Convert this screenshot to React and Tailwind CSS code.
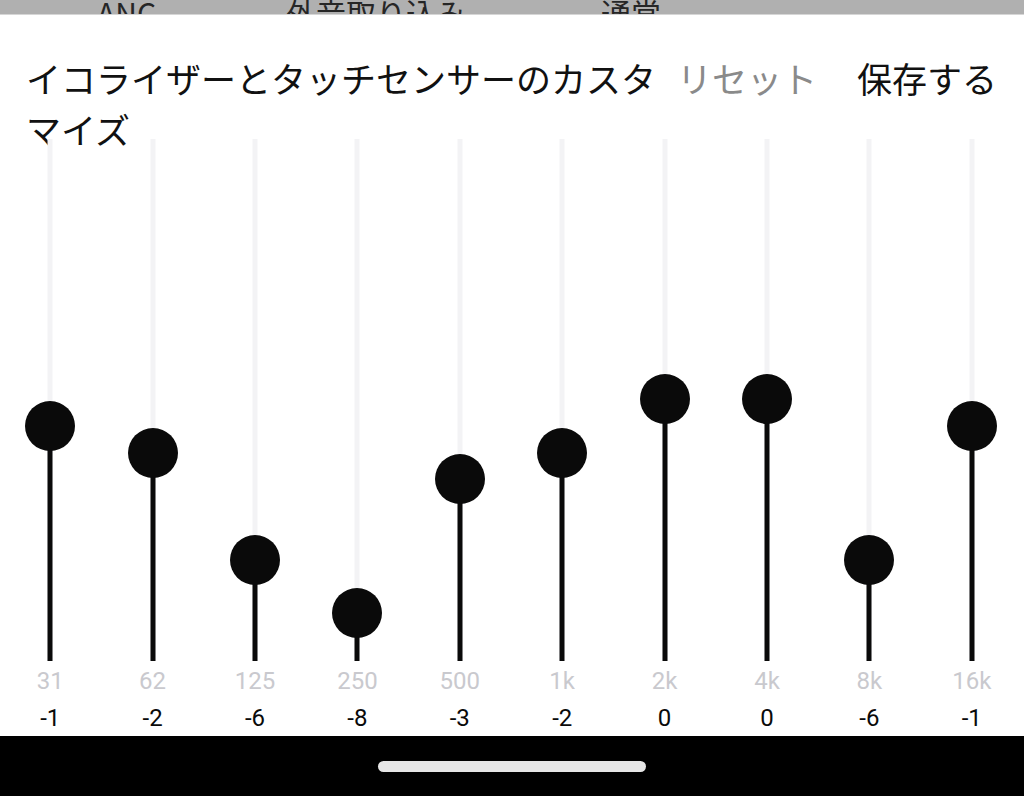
import React from "react";

const bands = [
  { freq: "31", value: -1 },
  { freq: "62", value: -2 },
  { freq: "125", value: -6 },
  { freq: "250", value: -8 },
  { freq: "500", value: -3 },
  { freq: "1k", value: -2 },
  { freq: "2k", value: 0 },
  { freq: "4k", value: 0 },
  { freq: "8k", value: -6 },
  { freq: "16k", value: -1 },
];

// track is 522px tall, 0 dB sits at 260px, ~26.75px per dB
const thumbTop = (value) => 260 - value * 26.75;

const Band = ({ band }) => {
  const center = thumbTop(band.value);

  return (
    <div className="flex flex-col items-center">
      <div className="relative h-[522px] w-[50px]">
        <div className="absolute left-1/2 top-0 h-full w-[5px] -translate-x-1/2 bg-[#f3f3f5]" />
        <div
          className="absolute bottom-0 left-1/2 w-[5px] -translate-x-1/2 bg-[#0a0a0a]"
          style={{ top: `${center}px` }}
        />
        <div
          className="absolute left-0 h-[50px] w-[50px] rounded-full bg-[#0a0a0a]"
          style={{ top: `${center - 25}px` }}
        />
      </div>
      <div className="mt-[2px] h-[36px] text-[24px] leading-[36px] text-[#c9c9ce]">
        {band.freq}
      </div>
      <div className="h-[37px] text-[24px] leading-[38px] text-[#0a0a0a]">
        {band.value}
      </div>
    </div>
  );
};

export default function App() {
  return (
    <div className="flex h-[796px] w-[1024px] flex-col overflow-hidden bg-white font-['Roboto','Noto_Sans_CJK_JP',sans-serif]">
      {/* dimmed tab bar behind the sheet */}
      <div className="relative h-[15px] shrink-0 overflow-hidden border-b border-[#d6d6d6] bg-[#b0b0b0] font-['Noto_Sans_CJK_JP',sans-serif] text-[30px] leading-[40px] text-[#262626]">
        <div className="absolute left-0 top-[-8px] flex w-full">
          <span className="ml-[97px]">ANC</span>
          <span className="ml-[130px]">外音取り込み</span>
          <span className="ml-[135px]">通常</span>
        </div>
      </div>

      <div className="flex h-[124px] shrink-0 items-start gap-[18px] pl-[26px] pr-[27px] pt-[37px] font-['Noto_Sans_CJK_JP',sans-serif] text-[35px] leading-[51px]">
        <div className="min-w-0 flex-1 text-[#111]">
          イコライザーとタッチセンサーのカスタマイズ
        </div>
        <span className="shrink-0 text-[#8a8a8a]">リセット</span>
        <span className="ml-[22px] shrink-0 text-[#111]">保存する</span>
      </div>

      <div className="-ml-[1px] grid w-[1024px] grid-cols-10">
        {bands.map((band) => (
          <Band key={band.freq} band={band} />
        ))}
      </div>

      <div className="flex flex-1 items-start justify-center bg-black pt-[25px]">
        <div className="h-[11px] w-[268px] rounded-full bg-[#e6e6e6]" />
      </div>
    </div>
  );
}
